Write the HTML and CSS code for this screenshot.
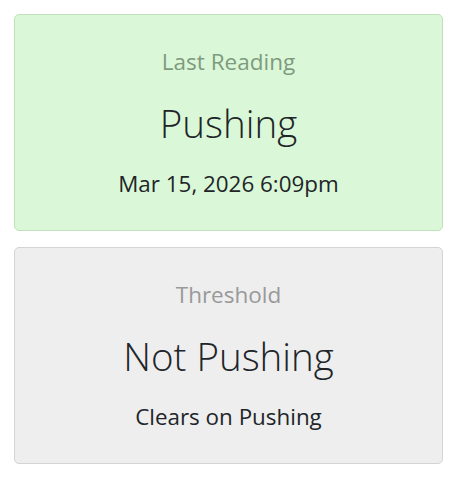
FILE: index.html
```html
<!DOCTYPE html>
<html>
<head>
<meta charset="utf-8">
<link rel="stylesheet" href="styles.css">
</head>
<body>
<div class="stack">
  <div class="card card-ok">
    <div class="label">Last Reading</div>
    <div class="value">Pushing</div>
    <div class="sub">Mar 15, 2026 6:09pm</div>
  </div>
  <div class="card card-neutral">
    <div class="label">Threshold</div>
    <div class="value">Not Pushing</div>
    <div class="sub">Clears on Pushing</div>
  </div>
</div>
</body>
</html>
```
FILE: styles.css
```css
html, body {
  margin: 0;
  background: #ffffff;
}
body {
  padding: 14px;
  font-family: "Open Sans", "Noto Sans", sans-serif;
  color: #212529;
}
.stack {
  display: flex;
  flex-direction: column;
  gap: 16px;
}
.card {
  border: 1px solid;
  border-radius: 5px;
  padding: 32px 20px 31px;
  text-align: center;
}
.card-ok {
  background: #daf8d7;
  border-color: #bfe2bb;
}
.card-neutral {
  background: #eeeeee;
  border-color: #d4d4d4;
}
.label {
  font-size: 22.5px;
  line-height: 30px;
  margin-bottom: 21px;
}
.card-ok .label { color: #7f9a80; }
.card-neutral .label { color: #999999; }
.value {
  font-size: 38.5px;
  font-weight: 300;
  line-height: 50px;
  margin-bottom: 21px;
}
.sub {
  font-size: 22.4px;
  line-height: 30px;
}
```
